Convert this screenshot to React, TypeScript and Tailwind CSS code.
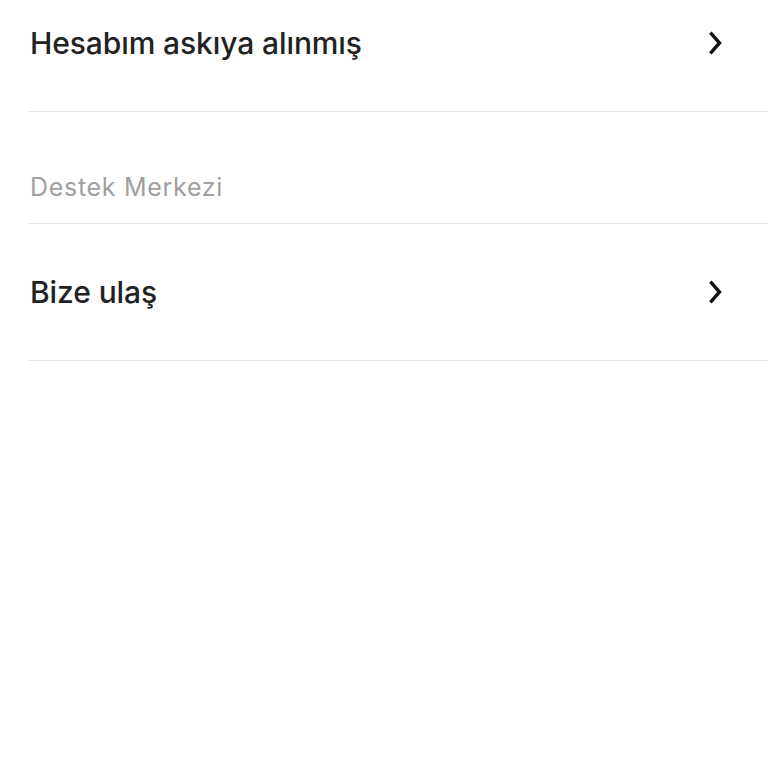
import React from "react";

function Chevron() {
  return (
    <svg width="16" height="24" viewBox="0 0 16 24" fill="none" className="shrink-0">
      <path d="M3.5 3 L11.5 12 L3.5 21" stroke="#111" strokeWidth="3.4" strokeLinecap="square" strokeLinejoin="miter" />
    </svg>
  );
}

function Row({ label }: { label: string }) {
  return (
    <div className="flex h-[137px] items-center justify-between border-b border-[#e6e6e6] pl-[2px] pr-[44px]">
      <span className="text-[30px] font-medium tracking-[-0.1px] text-[#222]">{label}</span>
      <Chevron />
    </div>
  );
}

export default function App() {
  return (
    <div className="h-[768px] w-[768px] overflow-hidden bg-white" style={{ fontFamily: "Inter, 'Noto Sans', sans-serif" }}>
      <div className="-mt-[25px] ml-[28px]">
        <Row label="Hesabım askıya alınmış" />
        <div className="flex h-[112px] items-end border-b border-[#e6e6e6] pb-[17px] pl-[2px]">
          <span className="text-[25px] font-normal tracking-[0.7px] text-[#a0a0a0]">Destek Merkezi</span>
        </div>
        <Row label="Bize ulaş" />
      </div>
    </div>
  );
}
